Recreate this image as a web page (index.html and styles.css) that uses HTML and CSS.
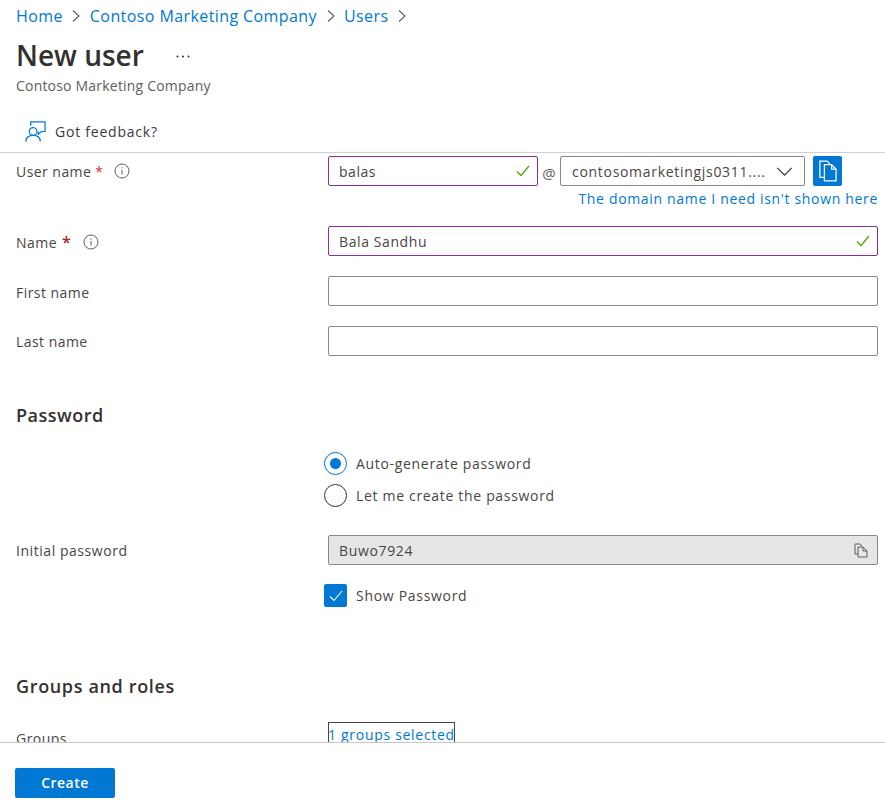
FILE: index.html
```html
<!DOCTYPE html>
<html lang="en">
<head>
<meta charset="utf-8">
<title>New user</title>
<link rel="stylesheet" href="styles.css">
</head>
<body>
<div class="page">
  <header class="head">
    <nav class="crumbs">
      <a>Home</a>
      <svg class="chev" viewBox="0 0 10 14"><path d="M2 1.500l6 5.500-6 5.500"/></svg>
      <a>Contoso Marketing Company</a>
      <svg class="chev" viewBox="0 0 10 14"><path d="M2 1.500l6 5.500-6 5.500"/></svg>
      <a>Users</a>
      <svg class="chev" viewBox="0 0 10 14"><path d="M2 1.500l6 5.500-6 5.500"/></svg>
    </nav>
    <div class="title-row"><h1>New user</h1><svg class="more" viewBox="0 0 14 3"><circle cx="1.500" cy="1.500" r="1"/><circle cx="7" cy="1.500" r="1"/><circle cx="12.500" cy="1.500" r="1"/></svg></div>
    <div class="sub">Contoso Marketing Company</div>
    <div class="toolbar">
      <svg class="fb" viewBox="0 0 22 22"><circle cx="8.500" cy="11" r="4"/><path d="M1 21.500c0-4.500 3-6.500 7.500-6.500s7.500 2 7.500 6.500"/><path d="M6 5V1h15v10h-4l-3 3v-3"/></svg>
      <span>Got feedback?</span>
    </div>
  </header>
  <main class="form">
    <div class="row row-user">
      <label class="lab">User name <b class="req">*</b>
        <svg class="info" viewBox="0 0 16 16"><circle cx="8" cy="8" r="7"/><path d="M8 7v4.500M8 4.200v1.300"/></svg></label>
      <div class="field">
        <div class="user-line">
          <div class="input ok short">balas<svg class="check" viewBox="0 0 14 12"><path d="M1 6.500l4 4L13 1"/></svg></div>
          <span class="at">@</span>
          <div class="input select">contosomarketingjs0311....<svg class="down" viewBox="0 0 18 10"><path d="M1 1l8 8 8-8"/></svg></div>
          <button class="copy-btn" aria-label="Copy"><svg viewBox="0 0 20 24"><path d="M6 19H1V1h8l3 3"/><path d="M6 5h8l5 5v13H6z"/><path d="M14 5v5h5"/></svg></button>
        </div>
        <a class="domain">The domain name I need isn't shown here</a>
      </div>
    </div>
    <div class="row row-name">
      <label class="lab">Name <b class="req dark">*</b>
        <svg class="info" viewBox="0 0 16 16"><circle cx="8" cy="8" r="7"/><path d="M8 7v4.500M8 4.200v1.300"/></svg></label>
      <div class="input ok">Bala Sandhu<svg class="check" viewBox="0 0 14 12"><path d="M1 6.500l4 4L13 1"/></svg></div>
    </div>
    <div class="row row-first">
      <label class="lab">First name</label>
      <div class="input"></div>
    </div>
    <div class="row row-last">
      <label class="lab">Last name</label>
      <div class="input"></div>
    </div>
    <h2 class="h-pass">Password</h2>
    <div class="radios">
      <div class="radio-line"><span class="radio on"></span>Auto-generate password</div>
      <div class="radio-line"><span class="radio"></span>Let me create the password</div>
    </div>
    <div class="row row-init">
      <label class="lab">Initial password</label>
      <div class="input off">Buwo7924<svg class="mini" viewBox="0 0 14 15"><path d="M4 11H1V1h5l2 2"/><path d="M4 4h5l4 4v6H4z"/><path d="M9 4v4h4"/></svg></div>
    </div>
    <div class="show"><span class="box"><svg viewBox="0 0 14 12"><path d="M1 6.500l4 4L13 1"/></svg></span>Show Password</div>
    <h2 class="h-groups">Groups and roles</h2>
    <div class="row row-groups">
      <label class="lab">Groups</label>
      <a class="picked">1 groups selected</a>
    </div>
  </main>
  <footer class="foot"><button class="create">Create</button></footer>
</div>
</body>
</html>
```
FILE: styles.css
```css
* { box-sizing: border-box; }
html, body { margin: 0; height: 100%; background: #fff; }
body { font-family: "Open Sans", "Noto Sans", sans-serif; color: #3b3a39; font-size: 14px; overflow: hidden; }
.page { height: 804px; display: flex; flex-direction: column; overflow: hidden; }
a { color: #0078d4; }

.head { flex: none; height: 153px; border-bottom: 1px solid #d0d0d0; }
.crumbs { height: 31px; padding-left: 16px; display: flex; align-items: center; font-size: 16px; gap: 8.500px; letter-spacing: 0.41px; }
.chev { width: 10px; height: 14px; fill: none; stroke: #605e5c; stroke-width: 1.1; }
.title-row { height: 37px; margin-top: 5px; padding-left: 16px; display: flex; align-items: center; }
h1 { margin: 0; font-size: 28px; font-weight: 600; color: #323130; }
.more { width: 14px; height: 3px; margin: 3px 0 0 32px; fill: #323130; }
.sub { padding-left: 16px; font-size: 14px; height: 22px; line-height: 22px; margin-top: 2px; color: #605e5c; letter-spacing: 0.2px; }
.toolbar { margin-top: 23px; padding-left: 25px; display: flex; align-items: center; gap: 9px; font-size: 14px; height: 22px; letter-spacing: 0.78px; }
.fb { width: 21px; height: 21px; fill: none; stroke: #0078d4; stroke-width: 1.3; }

.form { flex: 1; min-height: 0; overflow: hidden; padding: 0 7px 0 16px; }
.row { display: grid; grid-template-columns: 312px 550px; }
.lab { display: flex; align-items: center; height: 30px; font-size: 14px; color: #484644; gap: 4px; letter-spacing: 0.45px; }
.req { color: #d13438; font-weight: 400; }
.req.dark { color: #a4262c; font-size: 16px; font-weight: 600; }
.info { width: 16px; height: 16px; margin-left: 6px; fill: none; stroke: #605e5c; stroke-width: 1; }

.row-user { margin-top: 3px; }
.user-line { display: flex; align-items: center; }
.input { height: 30px; width: 550px; border: 1px solid #8a8886; border-radius: 2px; padding: 0 10px; display: flex; align-items: center; justify-content: space-between; font-size: 14px; color: #484644; letter-spacing: 0.55px; background: #fff; }
.input.ok { border-color: #8a2da5; }
.input.short { width: 210px; }
.check { width: 14px; height: 12px; fill: none; stroke: #57a300; stroke-width: 1.2; margin-right: -3px; }
.at { width: 22px; text-align: center; font-size: 15px; margin-top: 3px; color: #605e5c; }
.input.select { width: 245px; padding: 0 10px 0 11px; letter-spacing: 0.7px; }
.down { width: 17px; height: 9px; fill: none; stroke: #323130; stroke-width: 1.3; margin-right: 1px; }
.copy-btn { width: 29px; height: 30px; margin-left: 8px; padding: 0; border: 0; border-radius: 2px; background: #0078d4; display: flex; align-items: center; justify-content: center; }
.copy-btn svg { width: 18px; height: 24px; fill: none; stroke: #fff; stroke-width: 1.4; }
.domain { display: block; text-align: right; font-size: 14px; line-height: 20px; margin-top: 3px; letter-spacing: 0.67px; }

.row-name { margin-top: 17px; }
.row-name .lab { padding-top: 2px; gap: 5px; }
.row-name .info { margin-left: 7px; }
.row-name .input { letter-spacing: 0.6px; }
.row-first { margin-top: 20px; }
.row-first .lab { padding-top: 2px; }
.row-last { margin-top: 20px; }

h2 { margin: 0; font-size: 18px; font-weight: 600; color: #323130; line-height: 24px; }
.h-pass { margin-top: 47px; letter-spacing: 0.5px; }
.radios { margin: 24px 0 0 308px; display: flex; flex-direction: column; gap: 8px; }
.radio-line { height: 24px; padding-top: 1px; display: flex; align-items: center; gap: 9px; font-size: 14px; color: #484644; letter-spacing: 0.68px; }
.radio { width: 23px; height: 23px; margin-top: -1px; border: 1px solid #323130; border-radius: 50%; display: flex; align-items: center; justify-content: center; }
.radio.on { border-color: #0078d4; }
.radio.on::after { content: ""; width: 11px; height: 11px; border-radius: 50%; background: #0078d4; }

.row-init { margin-top: 28px; }
.row-init .lab { letter-spacing: 0.55px; }
.input.off { background: #e6e6e6; letter-spacing: 0.65px; }
.mini { width: 14px; height: 15px; fill: none; stroke: #605e5c; stroke-width: 1; margin-right: -1px; }
.show { margin: 19px 0 0 308px; display: flex; align-items: center; gap: 9px; height: 23px; font-size: 14px; color: #484644; letter-spacing: 0.7px; }
.box { width: 23px; height: 23px; background: #0078d4; border-radius: 2px; display: flex; align-items: center; justify-content: center; }
.box svg { width: 14px; height: 12px; fill: none; stroke: #fff; stroke-width: 1.1; }

.h-groups { margin-top: 67px; letter-spacing: 0.65px; }
.row-groups { margin-top: 24px; grid-template-columns: 312px auto; justify-content: start; }
.row-groups .lab { padding-top: 2px; align-items: flex-start; line-height: 30px; }
.picked { width: 127px; height: 30px; border: 1px solid #484644; white-space: nowrap; overflow: hidden; font-size: 14px; line-height: 24px; letter-spacing: 0.7px; text-indent: -1px; }

.foot { flex: none; height: 62px; border-top: 1px solid #c8c8c8; padding: 25px 0 0 15px; }
.create { width: 100px; height: 30px; border: 0; border-radius: 2px; padding: 0 0 2px; background: #0078d4; color: #fff; font: 600 14px "Open Sans", "Noto Sans", sans-serif; letter-spacing: 0.5px; }
```
